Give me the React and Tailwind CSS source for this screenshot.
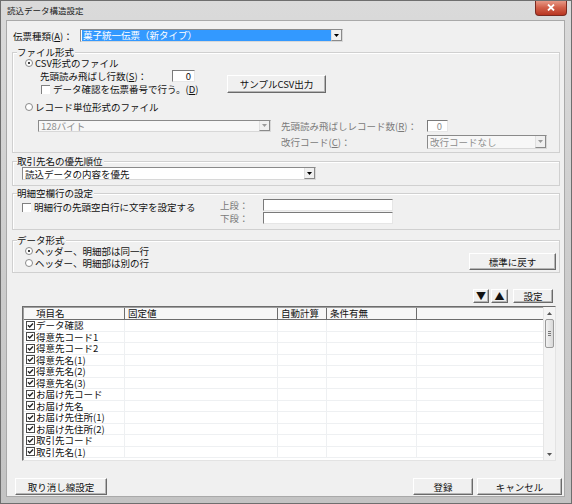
import React from "react";

const rows = [
  "データ確認",
  "得意先コード1",
  "得意先コード2",
  "得意先名(1)",
  "得意先名(2)",
  "得意先名(3)",
  "お届け先コード",
  "お届け先名",
  "お届け先住所(1)",
  "お届け先住所(2)",
  "取引先コード",
  "取引先名(1)",
];

function Radio({ checked }) {
  return (
    <span className="relative inline-block w-[8px] h-[8px] rounded-full border border-[#8a8a8a] bg-white shrink-0">
      {checked && <span className="absolute left-[2px] top-[2px] w-[2px] h-[2px] rounded-full bg-black" />}
    </span>
  );
}

function CheckBox({ checked }) {
  if (checked) {
    return (
      <svg width="9" height="9" viewBox="0 0 9 9" className="shrink-0">
        <rect x="0.5" y="0.5" width="8" height="8" fill="#fff" stroke="#4a4a4a" />
        <path d="M2 4.3 L3.7 6 L7 2.6" fill="none" stroke="#222" strokeWidth="1.4" />
      </svg>
    );
  }
  return <span className="inline-block w-[9px] h-[9px] bg-white border-t border-l border-t-[#808080] border-l-[#808080] shrink-0" />;
}

function Btn({ className, children }) {
  return (
    <div
      className={`flex items-center justify-center shrink-0 bg-[#f0f0f0] border border-t-white border-l-white border-b-[#6a6a6a] border-r-[#6a6a6a] shadow-[inset_-1px_-1px_0_#b5b5b5] ${className}`}
    >
      {children}
    </div>
  );
}

function Field({ className, children }) {
  return (
    <div
      className={`flex items-center shrink-0 bg-white border border-t-[#7a7a7a] border-l-[#7a7a7a] border-b-[#e6e6e6] border-r-[#e6e6e6] leading-[10px] ${className}`}
    >
      {children}
    </div>
  );
}

function Arrow({ color = "#000" }) {
  return (
    <svg width="5" height="3" viewBox="0 0 5 3">
      <path d="M0 0 H5 L2.5 3 Z" fill={color} />
    </svg>
  );
}

function Combo({ className, disabled, children }) {
  return (
    <div
      className={`flex items-stretch shrink-0 leading-[10px] border border-t-[#8a8a8a] border-l-[#8a8a8a] border-b-[#d8d8d8] border-r-[#d8d8d8] ${disabled ? "bg-[#f7f7f7]" : "bg-white"} ${className}`}
    >
      <div className="flex-1 flex items-center min-w-0">{children}</div>
      <div className="w-[11px] flex items-center justify-center bg-[#f0f0f0] border-l border-l-[#e0e0e0] border-r border-b border-r-[#8a8a8a] border-b-[#8a8a8a]">
        <Arrow color={disabled ? "#9a9a9a" : "#000"} />
      </div>
    </div>
  );
}

function Group({ title, className, children }) {
  return (
    <div className={`relative ml-[5px] w-[548px] border border-[#d0d0d0] shadow-[inset_1px_1px_0_#fff] ${className}`}>
      <span className="absolute left-[4px] -top-[7px] h-[12px] leading-[12px] bg-[#f0f0f0] pr-[1px]">{title}</span>
      {children}
    </div>
  );
}

export default function App() {
  return (
    <div className="w-[572px] h-[504px] bg-gradient-to-b from-[#dadada] via-[#cdcdcd] to-[#c3c3c3] border border-[#6e6e6e] flex flex-col font-['Noto_Sans_CJK_JP','Noto_Sans_CJK_SC',sans-serif] text-[9.5px] leading-[12px] text-[#111] whitespace-nowrap overflow-hidden">
      {/* Title bar */}
      <div className="h-[19px] shrink-0 flex items-start justify-between">
        <span className="mt-[3px] ml-[6px] text-[8.5px] text-[#1a1a1a]">読込データ構造設定</span>
        <div className="w-[32px] h-[16px] mr-[4px] -mt-px rounded-b-[4px] border border-t-0 border-[#7a2a20] bg-gradient-to-b from-[#e9a08f] via-[#d2604a] to-[#b8341f] flex items-center justify-center">
          <svg width="8" height="7" viewBox="0 0 8 7">
            <path d="M1 0.5 L7 6.5 M7 0.5 L1 6.5" stroke="#fff" strokeWidth="1.8" />
          </svg>
        </div>
      </div>

      {/* Client */}
      <div className="ml-[5px] w-[559px] h-[477px] bg-[#f0f0f0] border border-[#a9a9a9] flex flex-col">
        {/* 伝票種類 */}
        <div className="mt-[8px] h-[13px] flex items-center">
          <span className="ml-[6px] w-[67px]">
            伝票種類(<u>A</u>)：
          </span>
          <Combo className="w-[263px] h-[13px]">
            <span className="ml-[1px] h-[11px] flex-1 bg-[#3399ff] text-white leading-[11px] pl-[1px]">菓子統一伝票（新タイプ）</span>
          </Combo>
        </div>

        {/* ファイル形式 */}
        <Group title="ファイル形式" className="mt-[10px] h-[101px]">
          <div className="mt-[4px] h-[12px] pl-[12px] flex items-center gap-[2px]">
            <Radio checked />
            <span>CSV形式のファイル</span>
          </div>
          <div className="mt-[1px] flex pl-[27px]">
            <div className="w-[155px]">
              <div className="h-[12px] flex items-center">
                <span className="w-[132px]">
                  先頭読み飛ばし行数(<u>S</u>)：
                </span>
                <Field className="w-[23px] h-[12px] justify-end pr-[3px]">0</Field>
              </div>
              <div className="mt-[1px] h-[12px] flex items-center gap-[3px] pl-[1px]">
                <CheckBox />
                <span>
                  データ確認を伝票番号で行う。(<u>D</u>)
                </span>
              </div>
            </div>
            <Btn className="ml-[32px] mt-[5px] w-[99px] h-[18px]">サンプルCSV出力</Btn>
          </div>
          <div className="mt-[6px] h-[12px] pl-[12px] flex items-center gap-[2px]">
            <Radio />
            <span>レコード単位形式のファイル</span>
          </div>
          <div className="mt-[7px] flex pl-[25px]">
            <Combo disabled className="w-[233px] h-[12px]">
              <span className="pl-[2px] text-[#8d8d8d]">128バイト</span>
            </Combo>
            <div className="ml-[10px] text-[#7a7a7a]">
              <div className="h-[12px] flex items-center">
                <span className="w-[146px]">
                  先頭読み飛ばしレコード数(<u>R</u>)：
                </span>
                <Field className="w-[21px] h-[12px] justify-end pr-[5px] text-[#8d8d8d]">0</Field>
              </div>
              <div className="mt-[3px] h-[14px] flex items-center">
                <span className="w-[146px]">
                  改行コード(<u>C</u>)：
                </span>
                <Combo disabled className="w-[120px] h-[14px]">
                  <span className="pl-[2px] text-[#8d8d8d]">改行コードなし</span>
                </Combo>
              </div>
            </div>
          </div>
        </Group>

        {/* 取引先名の優先順位 */}
        <Group title="取引先名の優先順位" className="mt-[8px] h-[25px]">
          <Combo className="mt-[5px] ml-[9px] w-[294px] h-[13px]">
            <span className="pl-[2px]">読込データの内容を優先</span>
          </Combo>
        </Group>

        {/* 明細空欄行の設定 */}
        <Group title="明細空欄行の設定" className="mt-[7px] h-[37px]">
          <div className="flex">
            <div className="ml-[9px] mt-[7px] w-[198px] h-[12px] flex items-center gap-[3px]">
              <CheckBox />
              <span>明細行の先頭空白行に文字を設定する</span>
            </div>
            <div className="mt-[5px] text-[#7a7a7a]">
              <div className="h-[12px] flex items-center">
                <span className="w-[43px]">上段：</span>
                <Field className="w-[130px] h-[12px]" />
              </div>
              <div className="mt-[1px] h-[12px] flex items-center">
                <span className="w-[43px]">下段：</span>
                <Field className="w-[130px] h-[12px]" />
              </div>
            </div>
          </div>
        </Group>

        {/* データ形式 */}
        <Group title="データ形式" className="mt-[10px] h-[33px]">
          <div className="flex justify-between">
            <div className="mt-[4px] pl-[12px]">
              <div className="h-[12px] flex items-center gap-[2px]">
                <Radio checked />
                <span>ヘッダー、明細部は同一行</span>
              </div>
              <div className="h-[12px] flex items-center gap-[2px]">
                <Radio />
                <span>ヘッダー、明細部は別の行</span>
              </div>
            </div>
            <Btn className="mt-[12px] mr-[3px] w-[87px] h-[17px]">標準に戻す</Btn>
          </div>
        </Group>

        {/* ▼▲ 設定 */}
        <div className="mt-[16px] h-[14px] flex justify-end pr-[11px]">
          <Btn className="w-[16px] h-[14px] text-[10px]">▼</Btn>
          <Btn className="ml-[2px] w-[17px] h-[14px] text-[10px]">▲</Btn>
          <Btn className="ml-[5px] w-[40px] h-[14px]">設定</Btn>
        </div>

        {/* List */}
        <div className="mt-[3px] ml-[15px] w-[534px] h-[155px] bg-white border border-t-[#6d6d6d] border-l-[#6d6d6d] border-b-[#e3e3e3] border-r-[#e3e3e3] shadow-[inset_1px_1px_0_#a0a0a0] flex">
          <div className="w-[520px] pl-[1px] pt-[1px]">
            <div className="grid grid-cols-[101px_153px_49px_90px_126px] h-[12px] bg-[#f7f7f7] border-b border-b-[#6d6d6d] leading-[11px]">
              <div className="border-r border-r-[#6d6d6d] pl-[12px]">項目名</div>
              <div className="border-r border-r-[#6d6d6d] pl-[3px]">固定値</div>
              <div className="border-r border-r-[#6d6d6d] pl-[3px]">自動計算</div>
              <div className="border-r border-r-[#6d6d6d] pl-[3px]">条件有無</div>
              <div />
            </div>
            {rows.map((name, i) => (
              <div key={i} className="grid grid-cols-[101px_153px_49px_90px_126px] h-[11.5px] border-b border-b-[#eef0f2] leading-[10px]">
                <div className="flex items-center gap-[1px] pl-[2px] border-r border-r-[#eef0f2]">
                  <CheckBox checked />
                  <span>{name}</span>
                </div>
                <div className="border-r border-r-[#eef0f2]" />
                <div className="border-r border-r-[#eef0f2]" />
                <div className="border-r border-r-[#eef0f2]" />
                <div />
              </div>
            ))}
          </div>
          {/* scrollbar */}
          <div className="w-[12px] bg-[#f4f4f4] border-l border-l-[#e6e6e6] flex flex-col items-center">
            <div className="h-[12px] flex items-center justify-center">
              <svg width="5" height="3" viewBox="0 0 5 3">
                <path d="M0 3 H5 L2.5 0 Z" fill="#555" />
              </svg>
            </div>
            <div className="w-[9px] h-[29px] rounded-[2px] border border-[#9a9a9a] bg-gradient-to-r from-[#f2f2f2] to-[#d9d9d9] flex flex-col items-center justify-center gap-[1px]">
              <span className="w-[3px] h-px bg-[#777]" />
              <span className="w-[3px] h-px bg-[#777]" />
              <span className="w-[3px] h-px bg-[#777]" />
            </div>
            <div className="flex-1" />
            <div className="h-[12px] flex items-center justify-center">
              <Arrow color="#555" />
            </div>
          </div>
        </div>

        {/* bottom buttons */}
        <div className="mt-[17px] h-[17px] flex">
          <Btn className="ml-[8px] w-[92px] h-[17px]">取り消し線設定</Btn>
          <div className="flex-1" />
          <Btn className="w-[60px] h-[17px]">登録</Btn>
          <Btn className="ml-[4px] mr-[2px] w-[85px] h-[17px]">キャンセル</Btn>
        </div>
      </div>
    </div>
  );
}
